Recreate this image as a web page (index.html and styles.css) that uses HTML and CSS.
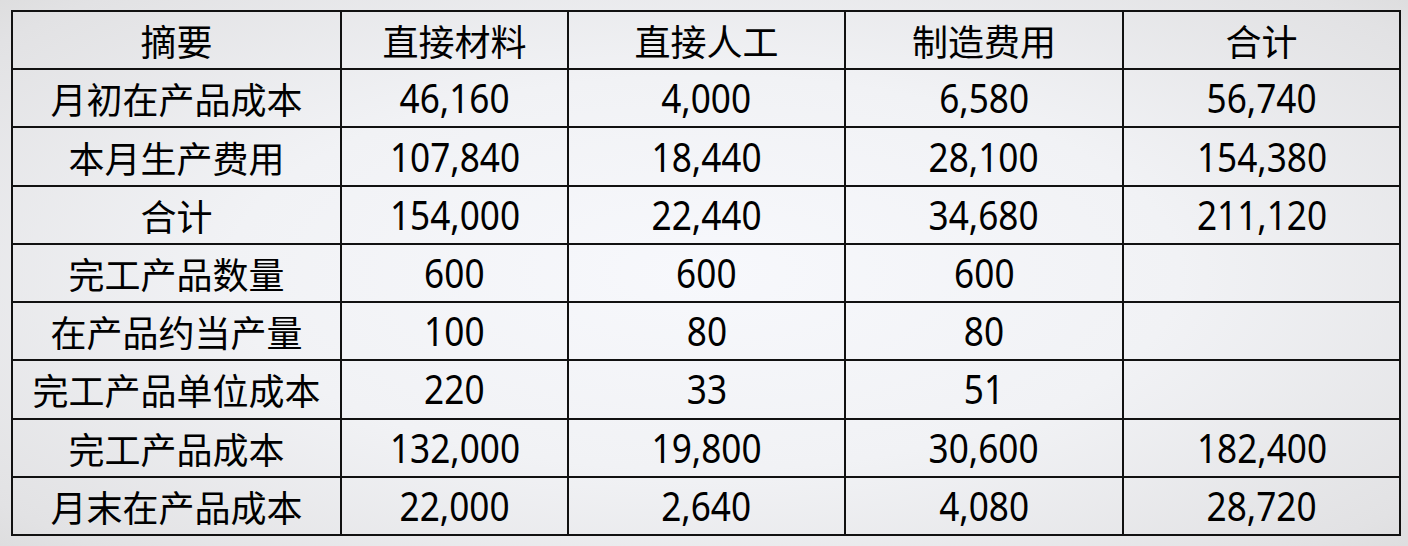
FILE: index.html
```html
<!DOCTYPE html>
<html lang="zh">
<head>
<meta charset="utf-8">
<link rel="stylesheet" href="styles.css">
</head>
<body>
<div class="page">
<table class="cost">
<colgroup>
<col class="c1"><col class="c2"><col class="c3"><col class="c4"><col class="c5">
</colgroup>
<tr><td><span class="t">摘要</span></td><td><span class="t">直接材料</span></td><td><span class="t">直接人工</span></td><td><span class="t">制造费用</span></td><td><span class="t">合计</span></td></tr>
<tr><td><span class="t">月初在产品成本</span></td><td><span class="n">46,160</span></td><td><span class="n">4,000</span></td><td><span class="n">6,580</span></td><td><span class="n">56,740</span></td></tr>
<tr><td><span class="t">本月生产费用</span></td><td><span class="n">107,840</span></td><td><span class="n">18,440</span></td><td><span class="n">28,100</span></td><td><span class="n">154,380</span></td></tr>
<tr><td><span class="t">合计</span></td><td><span class="n">154,000</span></td><td><span class="n">22,440</span></td><td><span class="n">34,680</span></td><td><span class="n">211,120</span></td></tr>
<tr><td><span class="t">完工产品数量</span></td><td><span class="n">600</span></td><td><span class="n">600</span></td><td><span class="n">600</span></td><td></td></tr>
<tr><td><span class="t">在产品约当产量</span></td><td><span class="n">100</span></td><td><span class="n">80</span></td><td><span class="n">80</span></td><td></td></tr>
<tr><td><span class="t">完工产品单位成本</span></td><td><span class="n">220</span></td><td><span class="n">33</span></td><td><span class="n">51</span></td><td></td></tr>
<tr><td><span class="t">完工产品成本</span></td><td><span class="n">132,000</span></td><td><span class="n">19,800</span></td><td><span class="n">30,600</span></td><td><span class="n">182,400</span></td></tr>
<tr><td><span class="t">月末在产品成本</span></td><td><span class="n">22,000</span></td><td><span class="n">2,640</span></td><td><span class="n">4,080</span></td><td><span class="n">28,720</span></td></tr>
</table>
</div>
</body>
</html>
```
FILE: styles.css
```css
html, body {
  margin: 0;
  padding: 0;
  width: 1408px;
  height: 546px;
  overflow: hidden;
}
body {
  background: radial-gradient(ellipse 75% 80% at 50% 50%, #f7f8fc 0%, #f1f2f5 45%, #e2e2e4 85%, #d8d8d8 100%);
}
.page {
  padding: 10px 0 0 11px;
}
.cost {
  border-collapse: collapse;
  width: 1388px;
  height: 526px;
  table-layout: fixed;
  font-family: "Noto Sans CJK SC", "Noto Sans", sans-serif;
  color: #000;
}
.c1 { width: 329px; }
.c2 { width: 227px; }
.c3 { width: 277px; }
.c4 { width: 278px; }
.c5 { width: 277px; }
.cost td {
  border: 2px solid #111;
  text-align: center;
  vertical-align: middle;
  padding: 0;
  height: 56px;
  line-height: 1;
}
.t {
  display: inline-block;
  font-size: 36px;
}
.n {
  display: inline-block;
  font-family: "Noto Sans", sans-serif;
  font-size: 40px;
  transform: scaleX(0.88);
}
```
